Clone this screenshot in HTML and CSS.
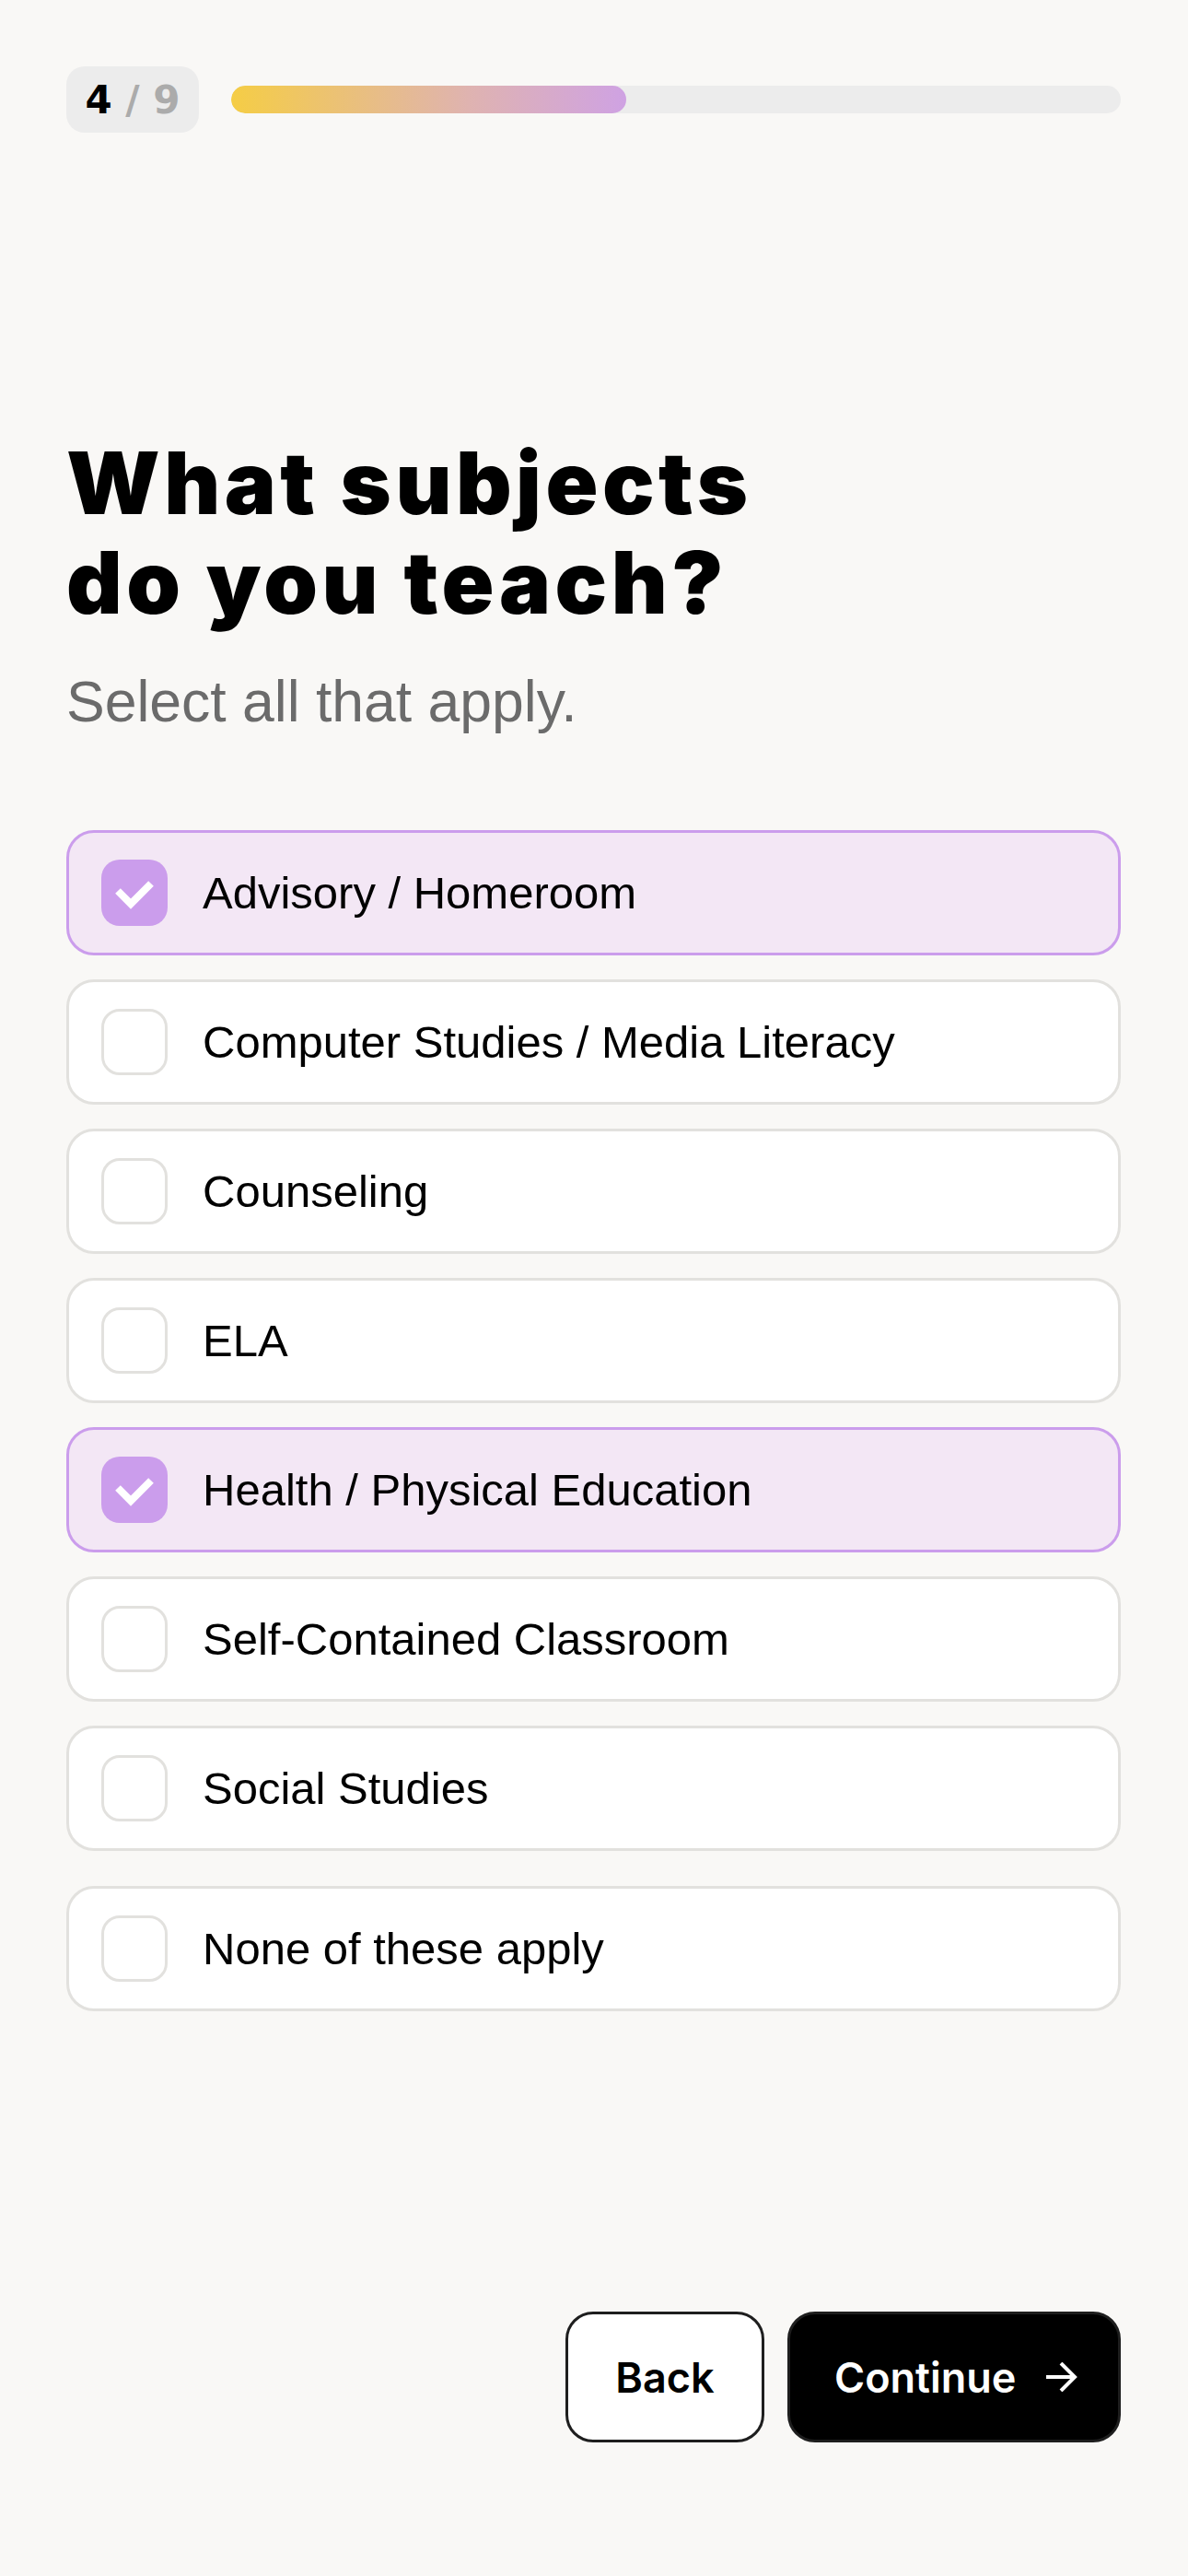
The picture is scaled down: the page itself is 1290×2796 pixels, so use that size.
FILE: index.html
```html
<!DOCTYPE html>
<html lang="en">
<head>
    <meta charset="UTF-8">
    <meta name="viewport" content="width=device-width, initial-scale=1.0">
    <title>Onboarding - Subjects</title>
    <link rel="stylesheet" href="styles.css">
</head>
<body>
    <div class="screen">
        <div class="top-bar">
            <div class="step-badge"><span class="step-current">4</span> <span class="step-total">/ 9</span></div>
            <div class="progress">
                <div class="progress-fill" style="width: 44.4%;"></div>
            </div>
        </div>

        <h1 class="title">What subjects<br>do you teach?</h1>
        <p class="subtitle">Select all that apply.</p>

        <div class="options">
            <label class="option checked">
                <span class="checkbox">
                    <svg viewBox="0 0 72 72" width="72" height="72"><path d="M18 34 L32 48 L54 26" fill="none" stroke="#fff" stroke-width="8"/></svg>
                </span>
                <span class="option-text">Advisory / Homeroom</span>
            </label>
            <label class="option">
                <span class="checkbox"></span>
                <span class="option-text">Computer Studies / Media Literacy</span>
            </label>
            <label class="option">
                <span class="checkbox"></span>
                <span class="option-text">Counseling</span>
            </label>
            <label class="option">
                <span class="checkbox"></span>
                <span class="option-text">ELA</span>
            </label>
            <label class="option checked">
                <span class="checkbox">
                    <svg viewBox="0 0 72 72" width="72" height="72"><path d="M18 34 L32 48 L54 26" fill="none" stroke="#fff" stroke-width="8"/></svg>
                </span>
                <span class="option-text">Health / Physical Education</span>
            </label>
            <label class="option">
                <span class="checkbox"></span>
                <span class="option-text">Self-Contained Classroom</span>
            </label>
            <label class="option">
                <span class="checkbox"></span>
                <span class="option-text">Social Studies</span>
            </label>
            <label class="option none-option">
                <span class="checkbox"></span>
                <span class="option-text">None of these apply</span>
            </label>
        </div>

        <div class="actions">
            <button class="btn btn-back">Back</button>
            <button class="btn btn-continue">Continue
                <svg viewBox="0 0 34 32" width="34" height="32"><path d="M0 16 H31 M16 1 L31 16 L16 31" fill="none" stroke="#fff" stroke-width="4"/></svg>
            </button>
        </div>
    </div>
</body>
</html>
```

FILE: styles.css
```css
body {
    margin: 0;
    background-color: #f9f8f6;
    font-family: 'Liberation Sans', Arial, sans-serif;
    color: #000;
}

.screen {
    box-sizing: border-box;
    width: 1290px;
    min-height: 2796px;
    padding: 72px 73px 145px 72px;
    display: flex;
    flex-direction: column;
}

.top-bar {
    display: flex;
    align-items: center;
    gap: 35px;
}

.step-badge {
    width: 144px;
    height: 72px;
    border-radius: 20px;
    background-color: #ececec;
    text-align: center;
    line-height: 74px;
    font-family: 'DejaVu Sans', sans-serif;
    font-weight: bold;
    font-size: 42px;
}

.step-current {
    color: #000;
}

.step-total {
    color: #ababab;
}

.progress {
    flex: 1;
    height: 30px;
    border-radius: 15px;
    background-color: #ececec;
    overflow: hidden;
}

.progress-fill {
    height: 100%;
    border-radius: 15px;
    background: linear-gradient(90deg, #f5cd45, #dfb3b0 60%, #cfa2e3);
}

.title {
    margin: 326px 0 0 0;
    font-family: 'Inter', sans-serif;
    font-weight: 900;
    font-size: 94px;
    line-height: 108px;
    letter-spacing: 4.5px;
}

.subtitle {
    margin: 40px 0 0 0;
    font-size: 62.5px;
    line-height: 70px;
    color: #6b6b6b;
}

.options {
    margin-top: 105px;
    display: flex;
    flex-direction: column;
    gap: 26px;
}

.option {
    box-sizing: border-box;
    height: 136px;
    padding: 0 35px;
    display: flex;
    align-items: center;
    gap: 38px;
    background-color: #fff;
    border: 3px solid #e2e1de;
    border-radius: 30px;
}

.option.checked {
    background-color: #f3e7f5;
    border-color: #cb9dec;
}

.none-option {
    margin-top: 12px;
}

.checkbox {
    box-sizing: border-box;
    width: 72px;
    height: 72px;
    flex-shrink: 0;
    border: 3px solid #e2e1de;
    border-radius: 20px;
    background-color: #fff;
}

.option.checked .checkbox {
    border: none;
    background-color: #cb9dec;
}

.checkbox svg {
    display: block;
}

.option-text {
    font-size: 49px;
}

.actions {
    margin-top: auto;
    display: flex;
    justify-content: flex-end;
    gap: 25px;
}

.btn {
    box-sizing: border-box;
    height: 142px;
    border: 3px solid #1e1e1e;
    border-radius: 30px;
    font-family: 'Inter', sans-serif;
    font-weight: 600;
    font-size: 45px;
    display: flex;
    align-items: center;
    cursor: pointer;
}

.btn-back {
    width: 216px;
    justify-content: center;
    background-color: #fff;
    color: #000;
}

.btn-continue {
    width: 362px;
    padding: 0 0 0 48px;
    gap: 33px;
    background-color: #000;
    color: #fff;
}
```
